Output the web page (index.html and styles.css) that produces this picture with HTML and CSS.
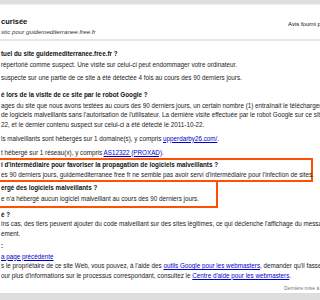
FILE: index.html
```html
<!DOCTYPE html>
<html lang="fr">
<head>
  <meta charset="UTF-8" />
  <title>Navigation sécurisée</title>
  <link rel="stylesheet" href="styles.css">
</head>
<body>

  <div class="topbar"></div>

  <header class="head">
    <div class="brand">
      <div class="title">curisée</div>
      <div class="sub">stic pour guidemediterranee.free.fr</div>
    </div>
    <div class="avis">Avis fourni p</div>
  </header>

  <main class="content">
    <section class="block first">
      <h2>tuel du site guidemediterranee.free.fr ?</h2>
      <p>répertorié comme suspect. Une visite sur celui-ci peut endommager votre ordinateur.</p>
      <p class="spaced">suspecte sur une partie de ce site a été détectée 4 fois au cours des 90 derniers jours.</p>
    </section>

    <section class="block">
      <h2>é lors de la visite de ce site par le robot Google ?</h2>
      <p>ages du site que nous avons testées au cours des 90 derniers jours, un certain nombre (1) entraînait le téléchargement<br>
       de logiciels malveillants sans l'autorisation de l'utilisateur. La dernière visite effectuée par le robot Google sur ce site<br>
      22, et le dernier contenu suspect sur celui-ci a été détecté le 2011-10-22.</p>
      <p class="wider">ls malveillants sont hébergés sur 1 domaine(s), y compris <a href="#">upperdarby26.com/</a>.</p>
      <p class="wider">t hébergé sur 1 réseau(x), y compris <a href="#">AS12322 (PROXAD)</a>.</p>
    </section>

    <section class="flag wide">
      <h2>i d'intermédiaire pour favoriser la propagation de logiciels malveillants ?</h2>
      <p>es 90 derniers jours, guidemediterranee free fr ne semble pas avoir servi d'intermédiaire pour l'infection de sites.</p>
    </section>

    <section class="flag narrow">
      <h2>ergé des logiciels malveillants ?</h2>
      <p>e n'a hébergé aucun logiciel malveillant au cours des 90 derniers jours.</p>
    </section>

    <section class="block after">
      <h2>é ?</h2>
      <p class="tight">ins cas, des tiers peuvent ajouter du code malveillant sur des sites légitimes, ce qui déclenche l'affichage du message<br>
      ement.</p>
    </section>

    <section class="block last">
      <h2>:</h2>
      <p><a href="#">a page précédente</a><br>
      s le propriétaire de ce site Web, vous pouvez, à l'aide des <a href="#">outils Google pour les webmasters</a>, demander qu'il fasse l<br>
      our plus d'informations sur le processus correspondant, consultez le <a href="#">Centre d'aide pour les webmasters</a>.</p>
    </section>
  </main>

  <footer class="foot">Dernière mise à</footer>

  <div class="bottombar"></div>

</body>
</html>
```

FILE: styles.css
```css
* {
  margin: 0;
  padding: 0;
  box-sizing: border-box;
}
html, body {
  width: 100%;
  height: 100%;
  background-color: #fff;
  font-family: 'Liberation Sans', Arial, sans-serif;
  overflow: hidden;
  color: #222;
}
body {
  display: flex;
  flex-direction: column;
}
.topbar {
  flex-shrink: 0;
  height: 5px;
  background: #dedede;
  border-bottom: 1px solid #ececec;
}
.head {
  flex-shrink: 0;
  display: flex;
  justify-content: space-between;
  align-items: flex-start;
  height: 36px;
  border-bottom: 2px solid #e6e6e6;
  white-space: nowrap;
}
.brand {
  padding: 11px 0 0 1px;
}
.title {
  font-size: 7.5px;
  font-weight: bold;
  line-height: 11px;
  color: #111;
}
.sub {
  font-size: 6.2px;
  font-style: italic;
  line-height: 9px;
  color: #333;
}
.avis {
  font-size: 6px;
  line-height: 8px;
  padding-top: 15px;
  width: 32px;
  overflow: hidden;
  color: #111;
}
.content {
  flex: 1;
  min-height: 0;
  overflow: hidden;
  white-space: nowrap;
  font-size: 6.3px;
  line-height: 9.5px;
}
.block {
  padding: 0 0 0 1px;
  margin-top: 7.5px;
}
.block.first {
  margin-top: 7.5px;
}
.block.after {
  margin-top: 1.5px;
}
.block.last {
  margin-top: 2.5px;
}
h2 {
  font-size: 6.3px;
  font-weight: bold;
  line-height: 9.5px;
  color: #111;
}
p {
  margin-top: 1.5px;
}
p.spaced {
  margin-top: 3.5px;
}
p.wider {
  margin-top: 4.5px;
}
p.tight {
  margin-top: 0;
}
a {
  color: #00c;
  text-decoration: underline;
}
.flag {
  border: 2px solid #ff5200;
  border-left: none;
  padding-left: 1px;
}
.wide {
  margin-top: 1px;
  padding-bottom: 1px;
  width: 313px;
}
.wide p {
  margin-top: 0;
}
.narrow {
  border-top: none;
  padding-top: 0.5px;
  padding-bottom: 3px;
  width: 218px;
}
.foot {
  flex-shrink: 0;
  font-size: 5px;
  line-height: 6px;
  color: #777;
  padding: 0 0 2px 284px;
  white-space: nowrap;
}
.bottombar {
  flex-shrink: 0;
  height: 7px;
  background: #dedede;
}
```
